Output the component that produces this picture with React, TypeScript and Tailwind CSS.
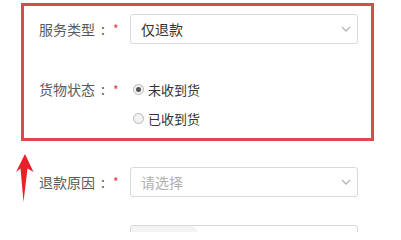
import React from "react";

const font = { fontFamily: '"Noto Sans CJK SC", "Noto Sans", sans-serif' };

function Chevron() {
  return (
    <svg width="10" height="6" viewBox="0 0 10 6" className="shrink-0">
      <path d="M1 1 L5 5 L9 1" fill="none" stroke="#b5b5b5" strokeWidth="1.3" />
    </svg>
  );
}

function Label({ text }: { text: string }) {
  return (
    <div className="w-[91px] shrink-0 flex items-center text-[14px] text-[#5a5a5a]">
      <span>{text}</span>
      <span className="w-[16px] text-center">:</span>
      <span className="text-[#e0393e] text-[12px] ml-[2px]">*</span>
    </div>
  );
}

function Select({ value, placeholder }: { value?: string; placeholder?: string }) {
  return (
    <div className="w-[228px] h-[30px] border border-[#d9d9d9] rounded-[3px] flex items-center justify-between pl-[10px] pr-[6px] bg-white">
      {value ? (
        <span className="text-[14px] text-[#333]">{value}</span>
      ) : (
        <span className="text-[14px] text-[#b0b0b0]">{placeholder}</span>
      )}
      <Chevron />
    </div>
  );
}

function Radio({ checked, text }: { checked?: boolean; text: string }) {
  return (
    <div className="h-[29px] flex items-center">
      <span className="w-[11px] h-[11px] rounded-full border border-[#b8b8b8] bg-[#f2f2f2] flex items-center justify-center ml-[3px]">
        {checked && <span className="w-[5px] h-[5px] rounded-full bg-[#555]" />}
      </span>
      <span className="ml-[4px] text-[13px] text-[#333]">{text}</span>
    </div>
  );
}

export default function App() {
  return (
    <div className="w-[401px] h-[232px] bg-white relative overflow-hidden flex flex-col pt-[3px]" style={font}>
      <div className="ml-[21px] w-[353px] h-[138px] shrink-0 border-[3px] border-[#dc4a50] pt-[8px] pl-[15px]">
        <div className="flex items-center h-[30px]">
          <Label text="服务类型" />
          <Select value="仅退款" />
        </div>
        <div className="flex items-start mt-[31px]">
          <div className="h-[29px] flex items-center">
            <Label text="货物状态" />
          </div>
          <div className="flex flex-col">
            <Radio checked text="未收到货" />
            <Radio text="已收到货" />
          </div>
        </div>
      </div>

      <div className="flex items-center h-[30px] mt-[26px] pl-[39px]">
        <Label text="退款原因" />
        <Select placeholder="请选择" />
      </div>

      <div className="flex items-start mt-[28px] pl-[39px]">
        <div className="w-[91px] shrink-0" />
        <div className="w-[228px] h-[30px] border border-[#d9d9d9] rounded-[3px] bg-white overflow-hidden flex">
          <div className="w-[66px] h-full bg-[#f4f4f4] rounded-tr-[6px]" />
        </div>
      </div>

      <svg className="absolute left-[12px] top-[150px]" width="24" height="56" viewBox="0 0 24 56">
        <path d="M13 4 L21.5 22 L15.5 18.5 L11.5 52 L8.5 18.5 L4 22 Z" fill="#e8202a" />
      </svg>
    </div>
  );
}
